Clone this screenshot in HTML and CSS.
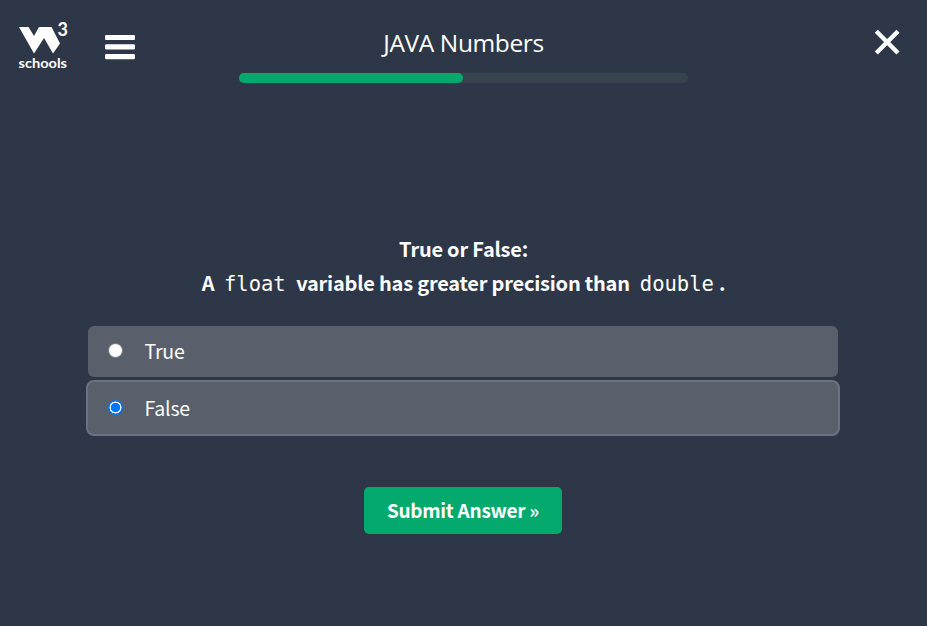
FILE: index.html
```
<!DOCTYPE html>
<html lang="en">
<head>
<meta charset="utf-8">
<title>JAVA Numbers</title>
<link rel="stylesheet" href="styles.css">
</head>
<body>
<header class="top">
  <div class="left">
    <svg class="logo" width="56" height="56" viewBox="0 -4 56 56" fill="#fff">
      <path d="M2 7H11.500L17 16 22 7H34.500L43 23.500 36 33.500 27 18 17 33.500Z"/>
      <text class="three" x="40.500" y="16.200">3</text>
      <text class="schools" x="1.500" y="47.500" textLength="48.500" lengthAdjust="spacingAndGlyphs">schools</text>
    </svg>
    <svg class="menu" width="30" height="26" viewBox="0 0 30 26" fill="#fff">
      <rect y="1" width="30" height="5" rx="1.300"/>
      <rect y="10.300" width="30" height="5.200" rx="1.300"/>
      <rect y="20" width="30" height="5.200" rx="1.300"/>
    </svg>
  </div>
  <div class="center">
    <h1>JAVA Numbers</h1>
    <div class="track"><div class="bar"></div></div>
  </div>
  <svg class="close" width="26" height="26" viewBox="0 0 26 26" stroke="#fff" stroke-width="4.400" stroke-linecap="butt">
    <path d="M2.300 2.300 24 24M24 2.300 2.300 24"/>
  </svg>
</header>
<main>
  <p class="question"><span>True or False:</span></p>
  <p class="question"><span>A</span><code class="first">float</code><span class="mid">variable has greater precision than</span><code>double</code><span class="dot">.</span></p>
  <form>
    <label class="option"><span class="radio"></span><span class="label">True</span></label>
    <label class="option selected"><span class="radio on"></span><span class="label">False</span></label>
    <button type="button">Submit Answer »</button>
  </form>
</main>
</body>
</html>
```
FILE: styles.css
```
* { box-sizing: border-box; }
body {
  margin: 0;
  height: 626px;
  overflow: hidden;
  background: #2e3748;
  color: #fff;
  font-family: "Noto Sans CJK SC", "Noto Sans", sans-serif;
}
.top {
  display: grid;
  grid-template-columns: 239px 449px 239px;
  height: 100px;
}
.left { display: flex; padding: 16px 0 0 17px; }
.menu { margin: 18px 0 0 31.5px; }
.three { font: bold 18px Lato, sans-serif; }
.schools { font: bold 14px Lato, sans-serif; }
.center { padding-top: 25px; }
h1 {
  margin: 0;
  height: 48px;
  text-align: center;
  font: 400 24.5px/36px "Open Sans", sans-serif;
  letter-spacing: -0.4px;
}
.track { height: 10px; border-radius: 5px; background: #38444d; }
.bar { width: 224px; height: 10px; border-radius: 5px; background: #04aa6d; }
.close { justify-self: end; margin: 29px 27px 0 0; }
main { padding-top: 132px; }
.question {
  display: flex;
  justify-content: center;
  align-items: baseline;
  margin: 0;
  height: 34px;
  font-size: 20px;
  font-weight: 700;
  line-height: 34px;
  letter-spacing: -0.22px;
  white-space: pre;
}
code {
  margin: 0 10px;
  font: 400 20.5px/34px "DejaVu Sans Mono", monospace;
  letter-spacing: 0;
}
code.first { margin: 0 10.500px 0 9.500px; }
.question .dot { margin-left: -5px; }
form { width: 754px; margin: 26px 0 0 86px; display: flex; flex-direction: column; }
.option {
  display: flex;
  align-items: center;
  height: 51px;
  margin: 0 2px;
  padding: 0 0 2px 20px;
  border-radius: 6px;
  background: #595f6b;
  font-size: 19.5px;
  letter-spacing: -0.2px;
}
.selected {
  height: 56px;
  margin: 3px 0 0;
  border: 2px solid #6b737e;
  border-radius: 8px;
}
.radio {
  width: 15px;
  height: 15px;
  margin: 0 21.5px 0 0;
  border: 1px solid #767676;
  border-radius: 50%;
  background: #fff;
}
.on { border: 0; background: radial-gradient(circle, #0075ff 4.4px, #fff 4.9px, #fff 5.7px, #0075ff 6.2px); }
button {
  align-self: center;
  width: 198px;
  height: 47px;
  margin-top: 51px;
  padding: 0 0 1px;
  border: 0;
  border-radius: 5px;
  background: #04aa6d;
  color: #fff;
  font: 700 19px/46px "Noto Sans CJK SC", "Noto Sans", sans-serif;
  letter-spacing: -0.27px;
}
```
